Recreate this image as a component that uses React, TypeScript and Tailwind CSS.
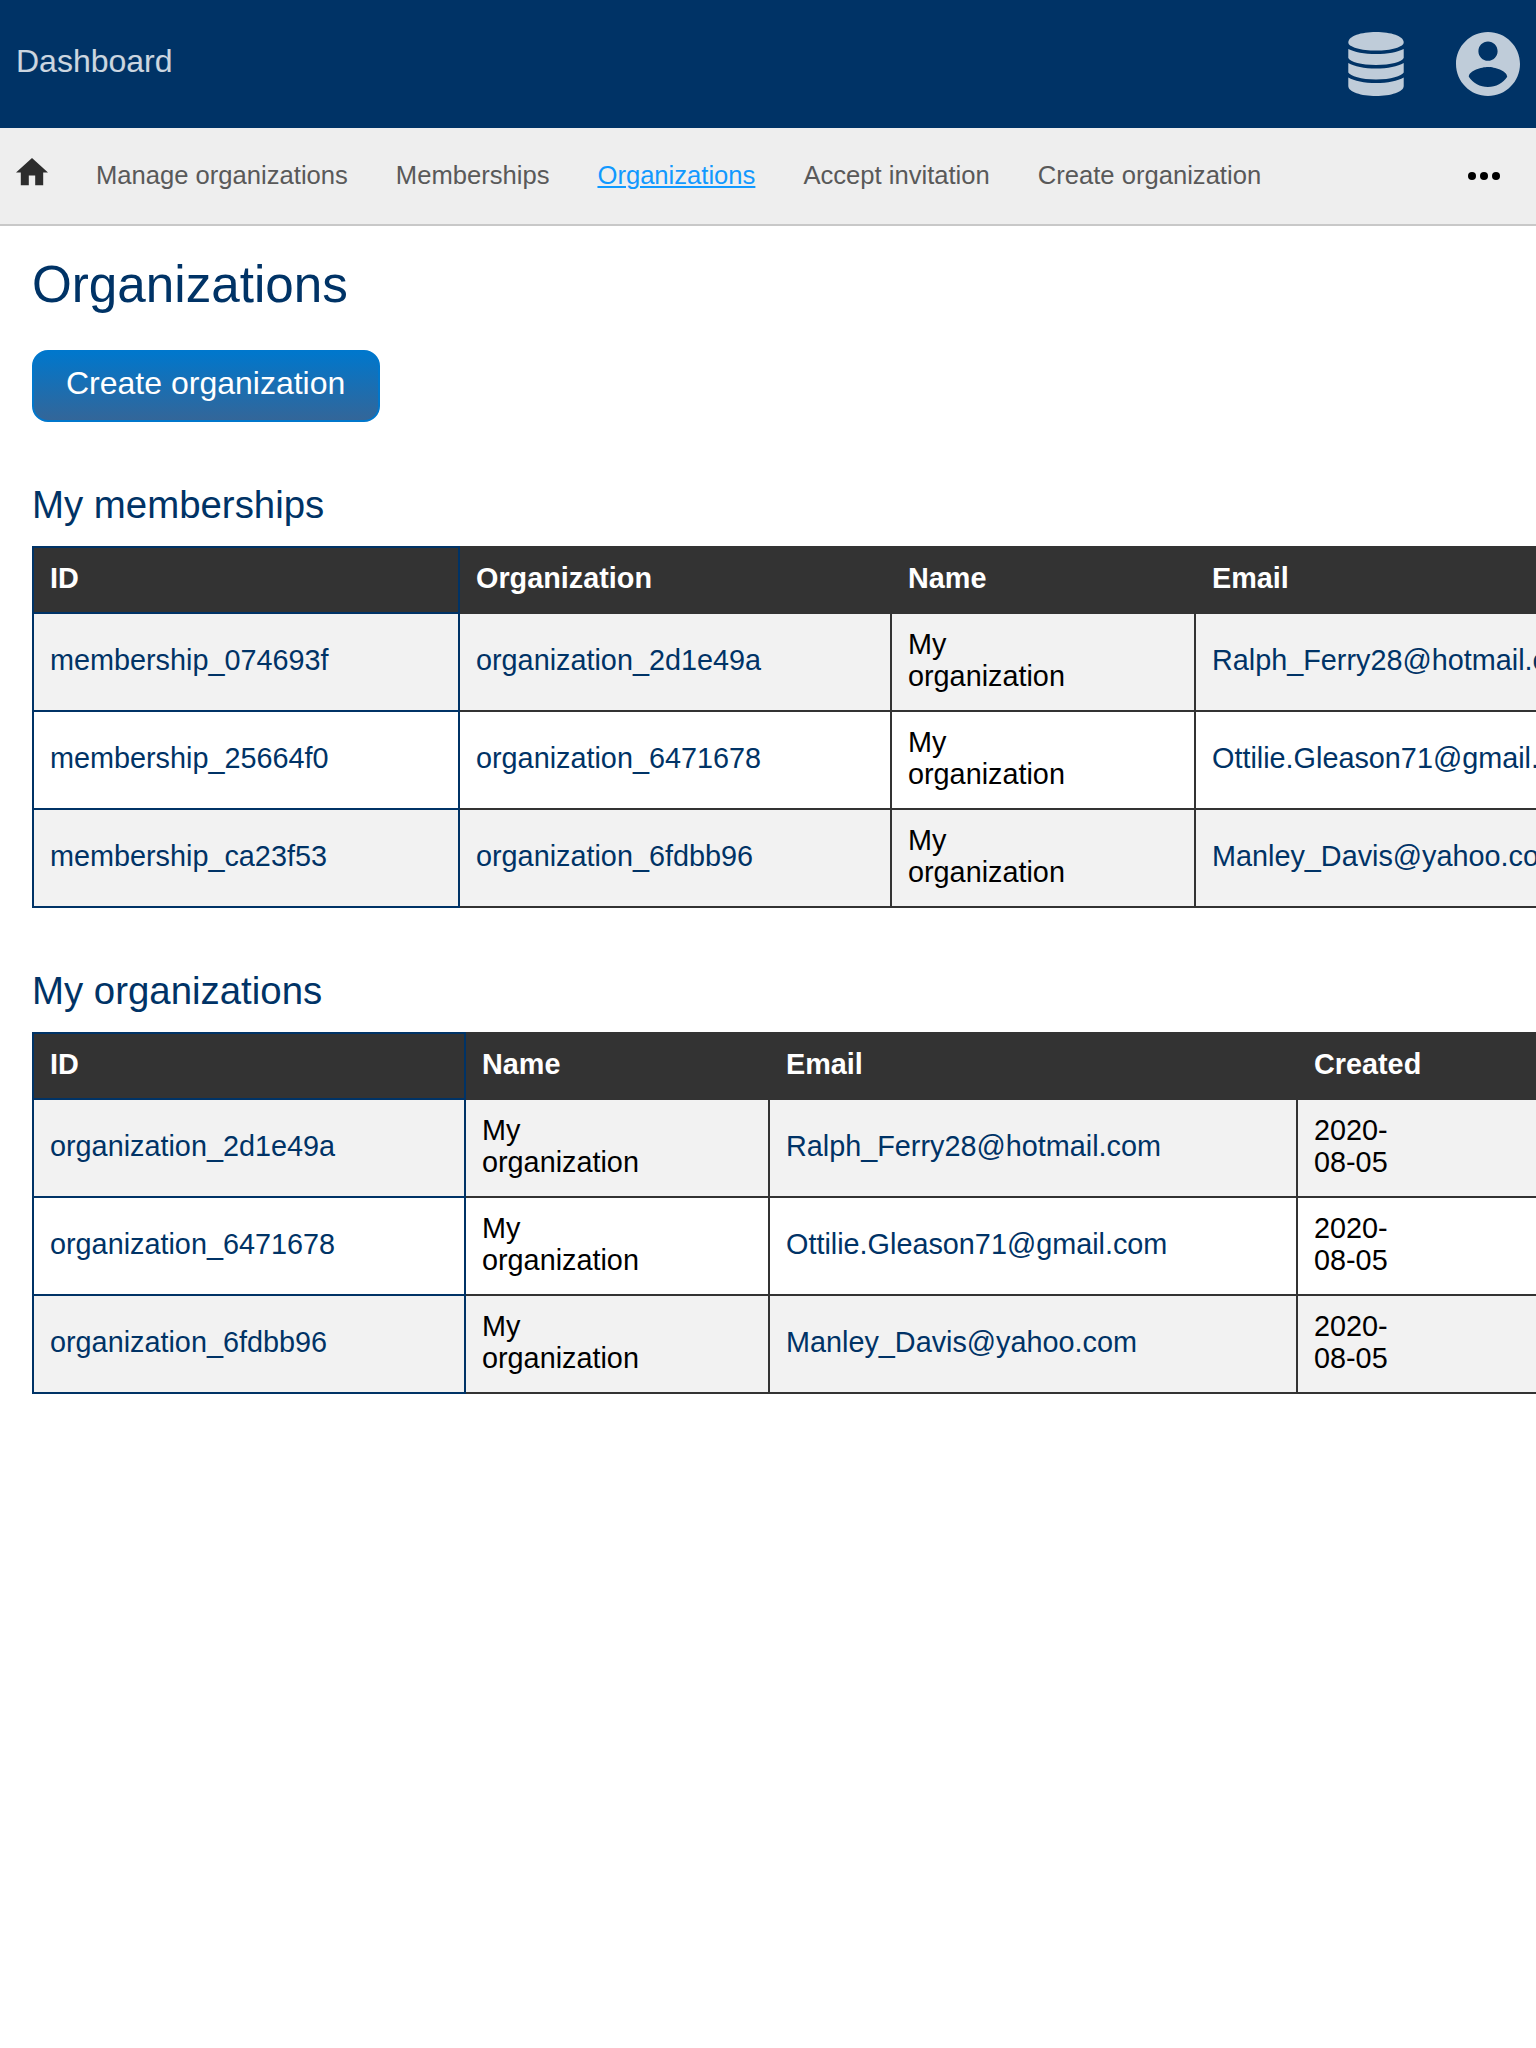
import React from "react";

const NAV = ["Manage organizations", "Memberships", "Organizations", "Accept invitation", "Create organization"];

type Cell = { text: string; link?: boolean; lines?: string[] };
type Column = { label: string; width: string };

const link = (text: string): Cell => ({ text, link: true });
const myOrg: Cell = { text: "My organization", lines: ["My", "organization"] };
const date: Cell = { text: "2020-08-05", lines: ["2020-", "08-05"] };

const MEMBERSHIP_COLUMNS: Column[] = [
  { label: "ID", width: "w-[426px]" },
  { label: "Organization", width: "w-[432px]" },
  { label: "Name", width: "w-[304px]" },
  { label: "Email", width: "w-[528px]" },
];

const MEMBERSHIPS: Cell[][] = [
  [link("membership_074693f"), link("organization_2d1e49a"), myOrg, link("Ralph_Ferry28@hotmail.com")],
  [link("membership_25664f0"), link("organization_6471678"), myOrg, link("Ottilie.Gleason71@gmail.com")],
  [link("membership_ca23f53"), link("organization_6fdbb96"), myOrg, link("Manley_Davis@yahoo.com")],
];

const ORGANIZATION_COLUMNS: Column[] = [
  { label: "ID", width: "w-[432px]" },
  { label: "Name", width: "w-[304px]" },
  { label: "Email", width: "w-[528px]" },
  { label: "Created", width: "w-[304px]" },
];

const ORGANIZATIONS: Cell[][] = [
  [link("organization_2d1e49a"), myOrg, link("Ralph_Ferry28@hotmail.com"), date],
  [link("organization_6471678"), myOrg, link("Ottilie.Gleason71@gmail.com"), date],
  [link("organization_6fdbb96"), myOrg, link("Manley_Davis@yahoo.com"), date],
];

function DataTable({ columns, rows, width }: { columns: Column[]; rows: Cell[][]; width: string }) {
  return (
    <table className={`${width} table-fixed border-collapse text-[28.8px] leading-8`}>
      <colgroup>
        {columns.map((c) => (
          <col key={c.label} className={c.width} />
        ))}
      </colgroup>
      <thead>
        <tr className="h-[66px] bg-[#333]">
          {columns.map((c, i) => (
            <th
              key={c.label}
              className={`border-2 px-4 pt-0 pb-1 text-left font-bold text-white ${i === 0 ? "border-[#036]" : "border-[#333]"}`}
            >
              {c.label}
            </th>
          ))}
        </tr>
      </thead>
      <tbody>
        {rows.map((row, r) => (
          <tr key={r} className="h-[98px] odd:bg-[#f2f2f2]">
            {row.map((cell, i) => (
              <td key={i} className={`border-2 px-4 pt-0 pb-1 ${i === 0 ? "border-[#036]" : "border-[#333]"}`}>
                {cell.link ? (
                  <a className="text-[#036]">{cell.text}</a>
                ) : (
                  cell.lines?.map((l) => (
                    <span key={l} className="block">
                      {l}
                    </span>
                  ))
                )}
              </td>
            ))}
          </tr>
        ))}
      </tbody>
    </table>
  );
}

export default function App() {
  return (
    <div className="h-[2048px] w-full overflow-hidden bg-white font-['Liberation_Sans',Arial,sans-serif] text-black">
      <header className="flex h-32 items-center justify-between bg-[#036] px-4">
        <span className="pb-1.5 text-[32px] leading-9 text-white/80">Dashboard</span>
        <div className="flex items-center gap-[52px] text-[#bfccd9]">
          <svg className="h-16 w-14" viewBox="-0.3 0 56.6 64" preserveAspectRatio="none" fill="currentColor">
            <path d="M28 0C43 0 56 4 56 10.500C56 15 43 18.600 28 18.600S0 15 0 10.500C0 4 13 0 28 0Z" />
            <path d="M0 17C6 20 16 22 28 22S50 20 56 17V26C54 30 43 33 28 33S2 30 0 26Z" />
            <path d="M0 31C6 34.500 16 36.500 28 36.500S50 34.500 56 31V40.500C54 44 43 47.500 28 47.500S2 44 0 40.500Z" />
            <path d="M0 45.500C6 49 16 51 28 51S50 49 56 45.500V54C56 60 43 64 28 64S0 60 0 54Z" />
          </svg>
          <svg className="size-16" viewBox="2 2 20 20" fill="currentColor">
            <path d="M12 2C6.480 2 2 6.480 2 12s4.480 10 10 10 10-4.480 10-10S17.520 2 12 2zm0 3c1.660 0 3 1.340 3 3s-1.340 3-3 3-3-1.340-3-3 1.340-3 3-3zm0 14.200c-2.500 0-4.710-1.280-6-3.220.030-1.990 4-3.080 6-3.080 1.990 0 5.970 1.090 6 3.080-1.290 1.940-3.500 3.220-6 3.220z" />
          </svg>
        </div>
      </header>

      <nav className="flex h-[98px] items-center border-b-2 border-[#c8c8c8] bg-[#eee] pr-9 pl-4 text-[25.6px] leading-8 text-[#595959]">
        <svg className="mb-2 h-[27.2px] w-8" viewBox="2 3 20 17" fill="#2d2d2d">
          <path d="M10 20v-6h4v6h5v-8h3L12 3 2 12h3v8z" />
        </svg>
        <div className="ml-12 flex gap-12 pb-0.5">
          {NAV.map((n) => (
            <a
              key={n}
              className={n === "Organizations" ? "text-[#1199ff] underline decoration-2 underline-offset-2" : ""}
            >
              {n}
            </a>
          ))}
        </div>
        <svg className="ml-auto h-2 w-8" viewBox="0 0 32 8" fill="#000">
          <circle cx="4" cy="4" r="4" />
          <circle cx="16" cy="4" r="4" />
          <circle cx="28" cy="4" r="4" />
        </svg>
      </nav>

      <main className="pt-[29px] pl-8">
        <h1 className="text-[51.2px] leading-[60px] text-[#036]">Organizations</h1>
        <button className="mt-[35px] flex h-[72px] w-[348px] items-center rounded-2xl border-2 border-[#0077cc] bg-linear-to-b/srgb from-[#0077cc] to-[#369] pb-1.5 pl-8 text-[32px] leading-9 whitespace-nowrap text-white">
          Create organization
        </button>
        <h2 className="mt-[61px] text-[38.4px] leading-[44px] text-[#036]">My memberships</h2>
        <div className="mt-[19px]">
          <DataTable columns={MEMBERSHIP_COLUMNS} rows={MEMBERSHIPS} width="w-[1692px]" />
        </div>
        <h2 className="mt-[61px] text-[38.4px] leading-[44px] text-[#036]">My organizations</h2>
        <div className="mt-[19px]">
          <DataTable columns={ORGANIZATION_COLUMNS} rows={ORGANIZATIONS} width="w-[1570px]" />
        </div>
      </main>
    </div>
  );
}
